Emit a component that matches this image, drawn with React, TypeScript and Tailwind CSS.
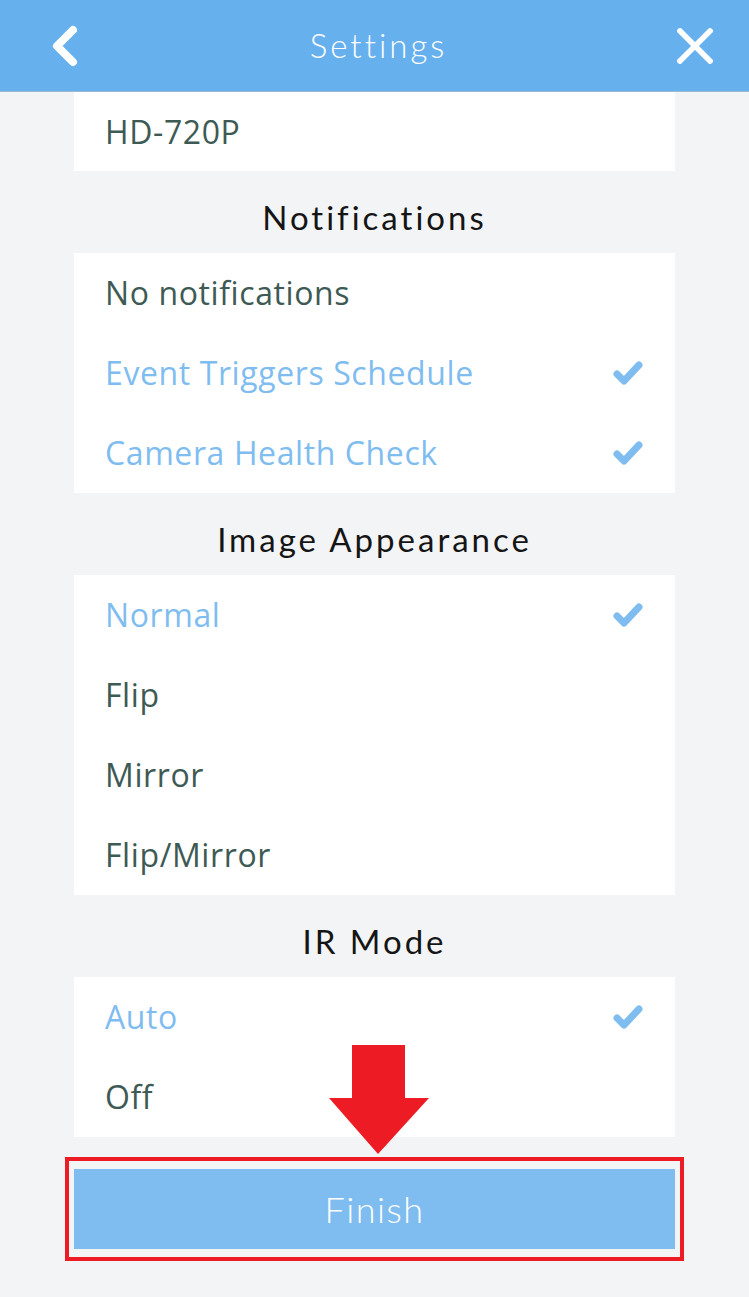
import React from "react";

const Check = () => (
  <svg width="30" height="26" viewBox="0 0 30 26" className="shrink-0">
    <path d="M4 14 L11 21 L26 5" fill="none" stroke="#7fbdf0" strokeWidth="7" strokeLinecap="round" strokeLinejoin="round" />
  </svg>
);

type Row = { label: string; active?: boolean };

const bodyFont = { fontFamily: "'Open Sans', Roboto, 'Liberation Sans', sans-serif" };
const titleFont = { fontFamily: "Lato, 'Noto Sans', sans-serif" };

const Panel = ({ rows }: { rows: Row[] }) => (
  <div className="mx-[74px] bg-white">
    {rows.map((r) => (
      <div key={r.label} className="flex h-[80px] items-center justify-between pl-[31px] pr-[32px]">
        <span
          className={`text-[32px] leading-none tracking-[0.6px] ${r.active ? "text-[#7fbdf0]" : "text-[#3e5a54]"}`}
          style={bodyFont}
        >
          {r.label}
        </span>
        {r.active && <Check />}
      </div>
    ))}
  </div>
);

const Title = ({ children }: { children: React.ReactNode }) => (
  <div
    className="flex h-[82px] items-center justify-center pt-[11px] text-[33px] font-normal tracking-[3px] text-[#151515]"
    style={titleFont}
  >
    {children}
  </div>
);

export default function App() {
  return (
    <div className="relative h-[1297px] w-[749px] overflow-hidden bg-[#f3f4f6]">
      <div className="flex h-[92px] items-center justify-between border-b border-[#9cb9d4] bg-[#67b0ee] pl-[50px] pr-[36px]">
        <svg width="30" height="42" viewBox="0 0 30 42">
          <path d="M23 5 L7 21 L23 37" fill="none" stroke="white" strokeWidth="8" strokeLinecap="round" strokeLinejoin="round" />
        </svg>
        <span className="text-[33px] font-light tracking-[3px] text-white" style={titleFont}>
          Settings
        </span>
        <svg width="36" height="36" viewBox="0 0 36 36">
          <path d="M3 3 L33 33 M33 3 L3 33" stroke="white" strokeWidth="5.5" strokeLinecap="square" />
        </svg>
      </div>
      <div className="mx-[74px] flex h-[79px] items-center bg-white pl-[31px]">
        <span className="text-[32px] leading-none tracking-[0.6px] text-[#3e5a54]" style={bodyFont}>
          HD-720P
        </span>
      </div>
      <Title>Notifications</Title>
      <Panel
        rows={[
          { label: "No notifications" },
          { label: "Event Triggers Schedule", active: true },
          { label: "Camera Health Check", active: true },
        ]}
      />
      <Title>Image Appearance</Title>
      <Panel
        rows={[
          { label: "Normal", active: true },
          { label: "Flip" },
          { label: "Mirror" },
          { label: "Flip/Mirror" },
        ]}
      />
      <Title>IR Mode</Title>
      <Panel rows={[{ label: "Auto", active: true }, { label: "Off" }]} />
      <div className="mx-[65px] mt-[20px] border-[4px] border-[#ed1c24] px-[5px] py-[8px]">
        <div
          className="flex h-[80px] items-center justify-center bg-[#7fbdf0] text-[36px] font-light tracking-[1.5px] text-white"
          style={titleFont}
        >
          Finish
        </div>
      </div>
      <svg className="absolute left-[327px] top-[1044px]" width="104" height="114" viewBox="0 0 104 114">
        <path d="M25 1 H78 V54 H102 L51 110 L2 54 H25 Z" fill="#ed1c24" />
      </svg>
    </div>
  );
}
